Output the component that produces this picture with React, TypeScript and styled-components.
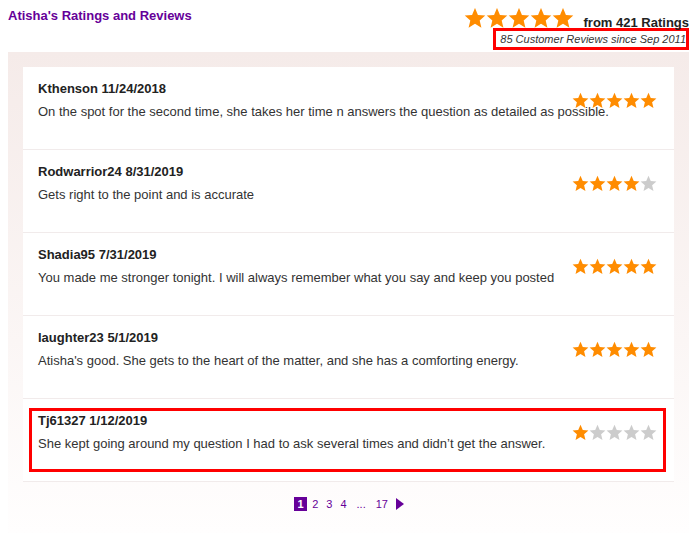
import React from 'react';
import styled, { createGlobalStyle } from 'styled-components';

const GlobalStyle = createGlobalStyle`
  body {
    margin: 8px 0 0 8px;
    font-family: "Liberation Sans", Arial, sans-serif;
    background: #fff;
    overflow: hidden;
  }
`;

interface Review {
  name: string;
  date: string;
  text: string;
  rating: number;
  flagged?: boolean;
}

const reviews: Review[] = [
  { name: 'Kthenson', date: '11/24/2018', text: 'On the spot for the second time, she takes her time n answers the question as detailed as possible.', rating: 5 },
  { name: 'Rodwarrior24', date: '8/31/2019', text: 'Gets right to the point and is accurate', rating: 4 },
  { name: 'Shadia95', date: '7/31/2019', text: 'You made me stronger tonight. I will always remember what you say and keep you posted', rating: 5 },
  { name: 'laughter23', date: '5/1/2019', text: "Atisha's good. She gets to the heart of the matter, and she has a comforting energy.", rating: 5 },
  { name: 'Tj61327', date: '1/12/2019', text: 'She kept going around my question I had to ask several times and didn\u2019t get the answer.', rating: 1, flagged: true },
];

function Star({ size, color }: { size: number; color: string }) {
  return (
    <svg width={size} height={size} viewBox="0 0 24 24">
      <polygon
        fill={color}
        points="12,1 15.2,8.6 23.2,9.3 17.1,14.6 19,22.6 12,18.3 5,22.6 6.9,14.6 0.8,9.3 8.8,8.6"
      />
    </svg>
  );
}

function Stars({ rating, size }: { rating: number; size: number }) {
  return (
    <StyledStars>
      {[0, 1, 2, 3, 4].map((i) => (
        <Star key={i} size={size} color={i < rating ? '#ff8c00' : '#cccccc'} />
      ))}
    </StyledStars>
  );
}

export default function App() {
  return (
    <StyledPage>
      <GlobalStyle />
      <StyledHeader>
        <StyledTitle>Atisha's Ratings and Reviews</StyledTitle>
        <StyledSummary>
          <StyledRatingLine>
            <Stars rating={5} size={22} />
            <StyledRatingCount>from 421 Ratings</StyledRatingCount>
          </StyledRatingLine>
          <StyledSince>85 Customer Reviews since Sep 2011</StyledSince>
        </StyledSummary>
      </StyledHeader>

      <StyledPanel>
        <StyledList>
          {reviews.map((review, idx) => (
            <StyledRow key={idx}>
              {review.flagged && <StyledHighlight />}
              <StyledContent>
                <StyledName>{review.name} {review.date}</StyledName>
                <StyledText>{review.text}</StyledText>
              </StyledContent>
              <StyledRowStars>
                <Stars rating={review.rating} size={17} />
              </StyledRowStars>
            </StyledRow>
          ))}
        </StyledList>

        <StyledPager>
          <StyledPageLink active>1</StyledPageLink>
          <StyledPageLink>2</StyledPageLink>
          <StyledPageLink>3</StyledPageLink>
          <StyledPageLink>4</StyledPageLink>
          <StyledEllipsis>...</StyledEllipsis>
          <StyledPageLink>17</StyledPageLink>
          <StyledNext />
        </StyledPager>
      </StyledPanel>
    </StyledPage>
  );
};

const StyledPage = styled.div`
  width: 681px;
`;

const StyledHeader = styled.div`
  display: flex;
  justify-content: space-between;
  align-items: flex-start;
  height: 44px;
`;

const StyledTitle = styled.h1`
  margin: 0;
  font-size: 13px;
  line-height: 16px;
  font-weight: bold;
  color: #660099;
`;

const StyledSummary = styled.div`
  display: flex;
  flex-direction: column;
  align-items: flex-end;
`;

const StyledRatingLine = styled.div`
  display: flex;
  align-items: center;
  height: 20px;
`;

const StyledRatingCount = styled.span`
  margin-left: 10px;
  font-size: 13px;
  font-weight: bold;
  color: #222;
  position: relative;
  top: 4px;
`;

const StyledSince = styled.div`
  border: 3px solid #ff0000;
  padding: 0 0 0 4px;
  font-size: 11px;
  line-height: 16px;
  font-style: italic;
  color: #333;
  white-space: nowrap;
`;

const StyledStars = styled.div`
  display: flex;
  svg {
    display: block;
  }
`;

const StyledPanel = styled.div`
  background: linear-gradient(to bottom, #f5ebe9 0%, #fbf6f5 60%, #fffefe 100%);
  padding: 15px 15px 22px;
`;

const StyledList = styled.div`
  background: #fff;
`;

const StyledRow = styled.div`
  position: relative;
  display: grid;
  grid-template-areas: 'cell';
  height: 82px;
  box-sizing: content-box;
  padding: 0 15px;
  border-bottom: 1px solid #f1ebeb;
`;

const StyledHighlight = styled.div`
  position: absolute;
  top: 9px;
  left: 6px;
  right: 8px;
  bottom: 9px;
  border: 3px solid #ff0000;
  pointer-events: none;
`;

const StyledContent = styled.div`
  grid-area: cell;
  padding-top: 13px;
`;

const StyledName = styled.div`
  font-size: 13px;
  line-height: 18px;
  font-weight: bold;
  color: #222;
`;

const StyledText = styled.div`
  margin-top: 5px;
  font-size: 13px;
  line-height: 18px;
  color: #333;
`;

const StyledRowStars = styled.div`
  grid-area: cell;
  justify-self: end;
  align-self: start;
  margin-top: 25px;
  margin-right: 2px;
`;

const StyledPager = styled.div`
  display: flex;
  justify-content: center;
  align-items: center;
  margin-top: 15px;
  font-size: 11px;
  color: #660099;
`;

const StyledPageLink = styled.span<{ active?: boolean }>`
  padding: 0 ${({ active }) => (active ? '3.5px' : '3px')};
  margin: 0 1px;
  line-height: 14px;
  font-weight: ${({ active }) => (active ? 'bold' : 'normal')};
  color: ${({ active }) => (active ? '#fff' : '#660099')};
  background: ${({ active }) => (active ? '#660099' : 'transparent')};
`;

const StyledEllipsis = styled.span`
  margin: 0 6px;
  font-size: 11px;
  color: #660099;
`;

const StyledNext = styled.span`
  margin-left: 4px;
  width: 0;
  height: 0;
  border-left: 8px solid #660099;
  border-top: 6px solid transparent;
  border-bottom: 6px solid transparent;
`;
